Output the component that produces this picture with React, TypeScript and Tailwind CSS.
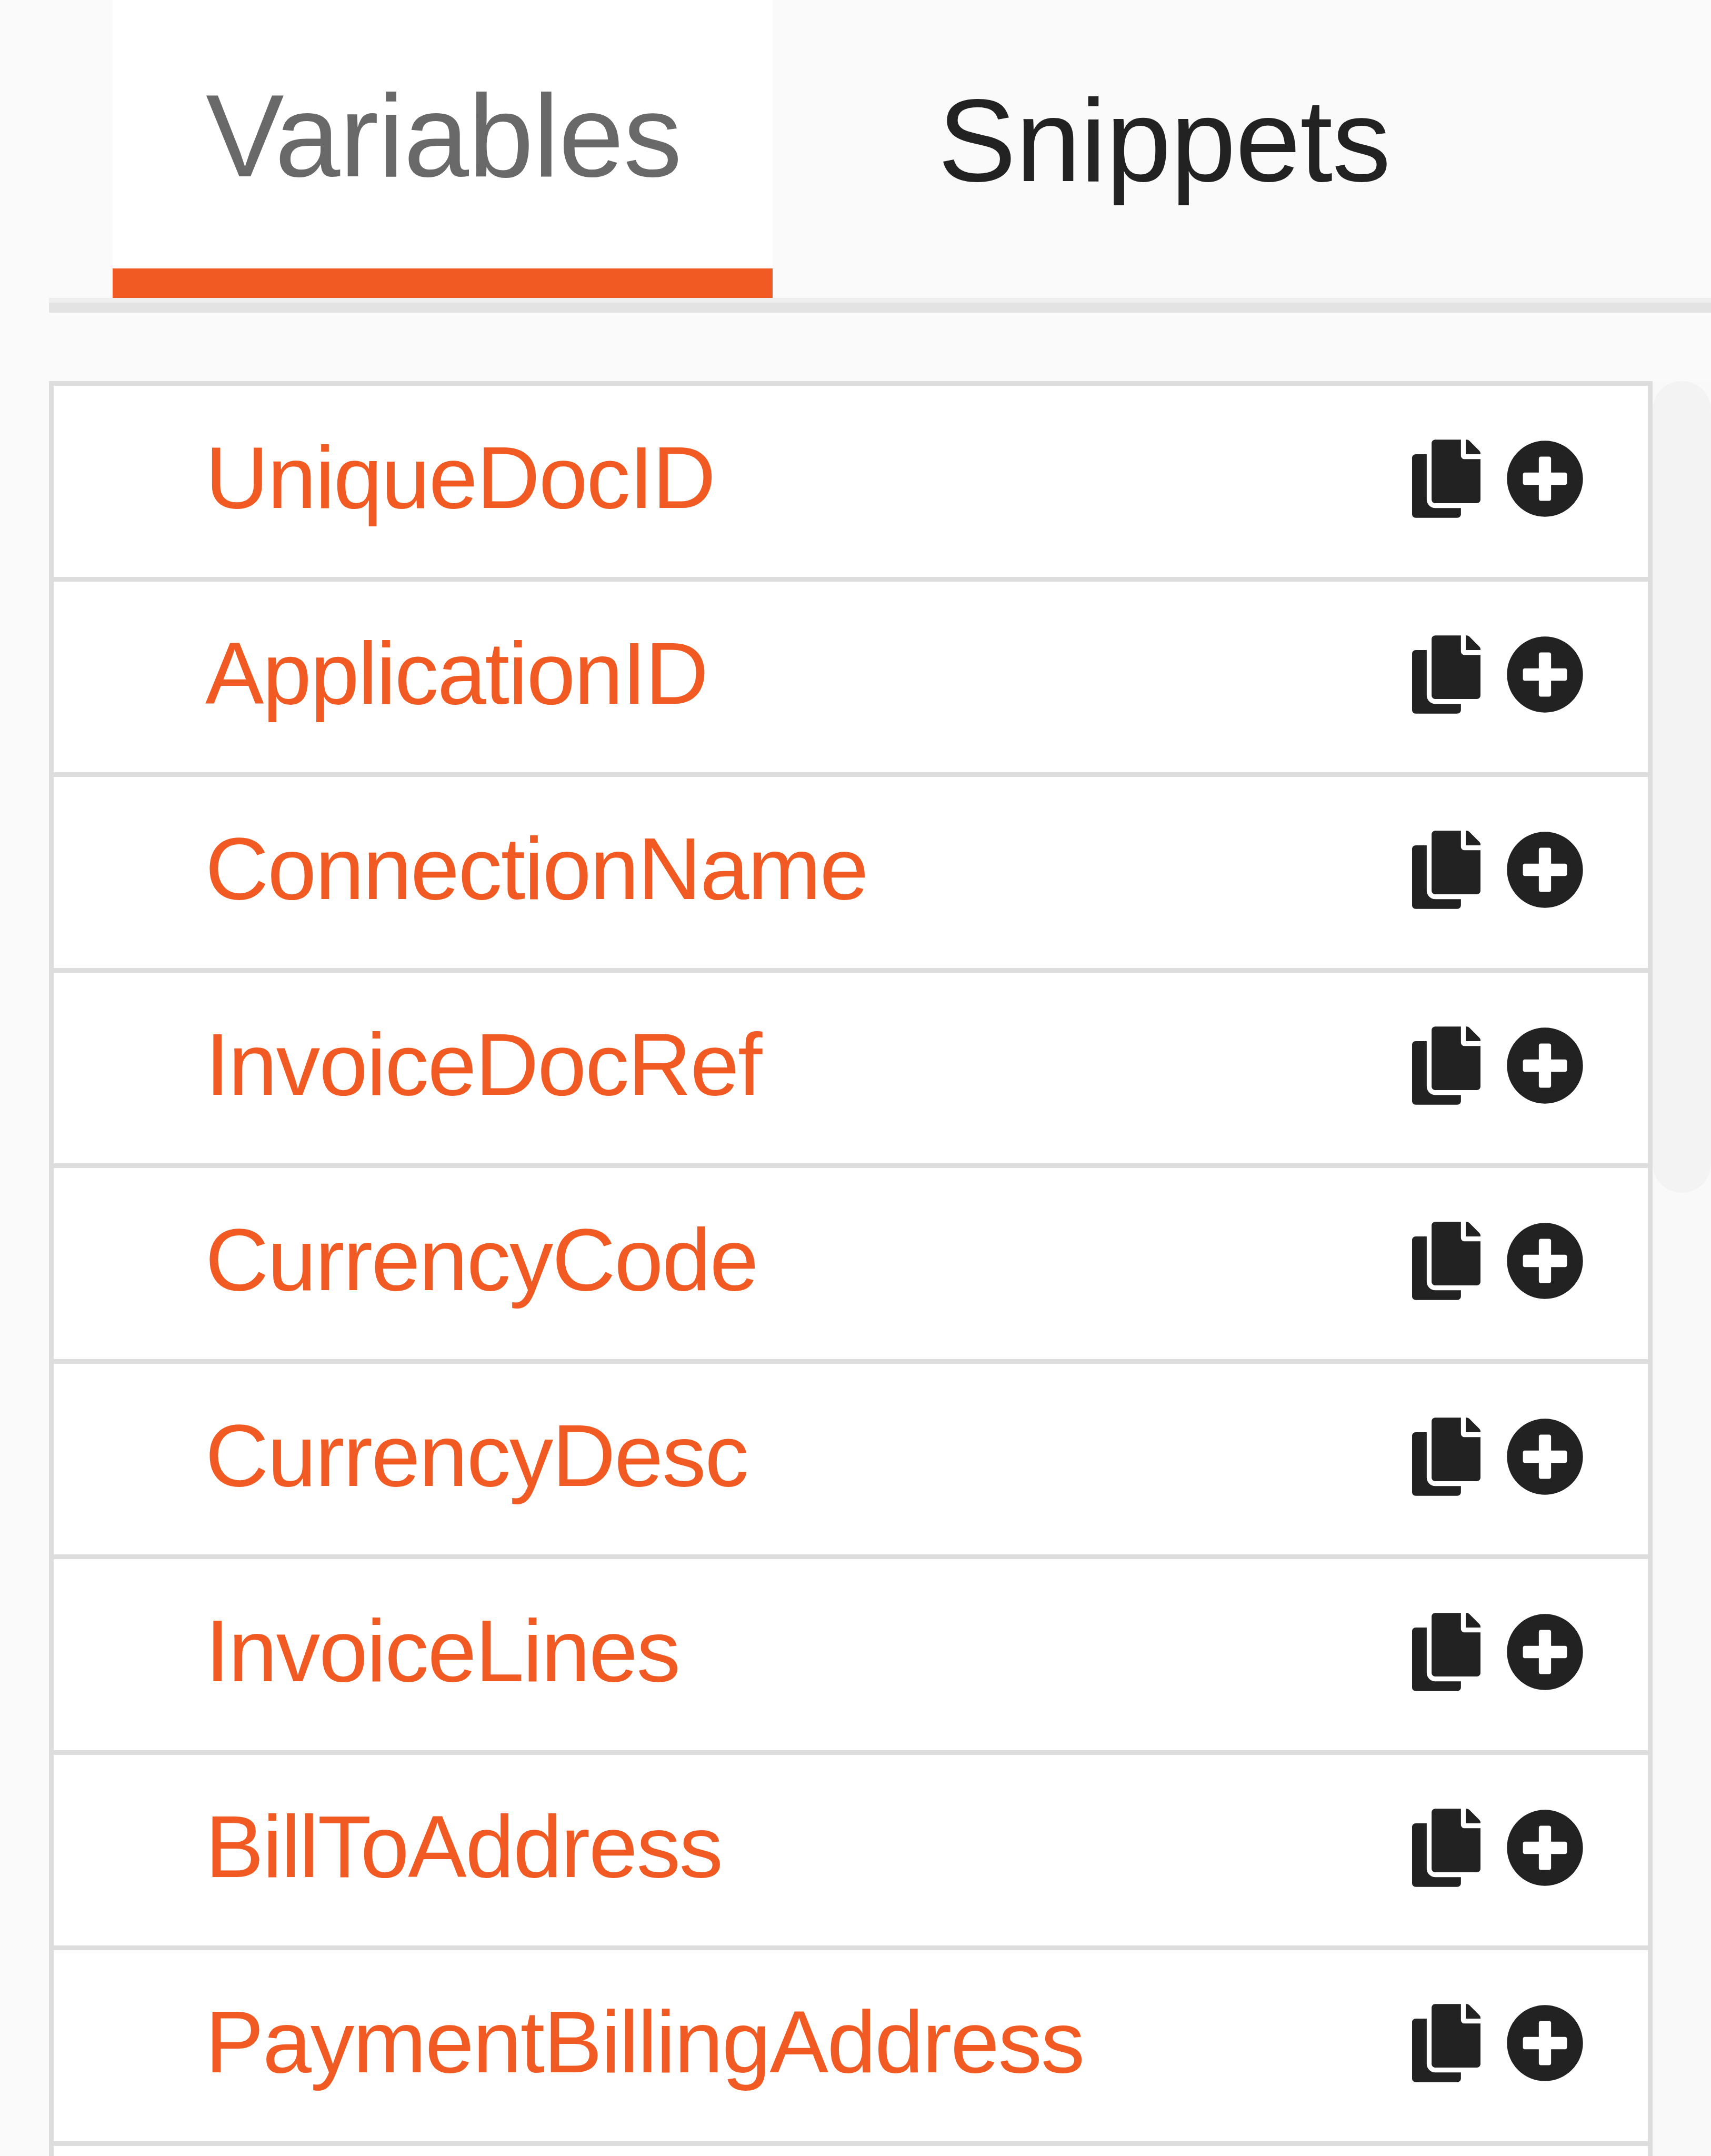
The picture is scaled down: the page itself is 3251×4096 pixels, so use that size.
import { useState } from "react";
import { FaCopy, FaPlusCircle } from "react-icons/fa";

const variables = [
  "UniqueDocID",
  "ApplicationID",
  "ConnectionName",
  "InvoiceDocRef",
  "CurrencyCode",
  "CurrencyDesc",
  "InvoiceLines",
  "BillToAddress",
  "PaymentBillingAddress",
];

interface VariableRowProps {
  name: string;
}

function VariableRow({ name }: VariableRowProps) {
  return (
    <li className="box-border flex h-[371.5px] shrink-0 items-center justify-between border-t-[9px] border-[#dddddd] pr-[121px] pb-[9px] pl-[288px]">
      <span className="pb-1 text-[167px] leading-none tracking-[-2.3px] text-[#f15a22]">{name}</span>
      <div className="flex items-center gap-[48px] text-[#222222]">
        <button type="button" aria-label="Copy">
          <FaCopy className="block h-[149px] w-[130px]" />
        </button>
        <button type="button" aria-label="Insert">
          <FaPlusCircle className="block h-[149px] w-[149px]" />
        </button>
      </div>
    </li>
  );
}

export default function App() {
  const [activeTab, setActiveTab] = useState("variables");

  return (
    <div className="flex h-[4096px] w-[3251px] flex-col overflow-hidden bg-[#fafafa] pl-[93px] font-['Liberation_Sans',Arial,sans-serif]">
      {/* Tabs */}
      <div className="flex h-[566px] shrink-0 pl-[121px] text-[223px] leading-none tracking-[-1px]">
        <button
          type="button"
          aria-pressed={activeTab === "variables"}
          onClick={() => setActiveTab("variables")}
          className="flex w-[1254px] items-center border-b-[56px] border-[#f15a22] bg-white pt-1 pl-[177px] text-[#696969]"
        >
          Variables
        </button>
        <button
          type="button"
          aria-pressed={activeTab === "snippets"}
          onClick={() => setActiveTab("snippets")}
          className="flex items-center border-b-[56px] border-transparent pt-[22px] pl-[314px] text-[#222222]"
        >
          Snippets
        </button>
      </div>
      <div className="h-7 shrink-0 border-t-[9px] border-[#eeeeee] bg-[#e3e3e3]" />

      {/* Variable list */}
      <div className="mt-[130px] flex min-h-0 flex-1">
        <ul className="flex w-[3047px] flex-col border-x-[9px] border-[#dddddd] bg-white">
          {variables.map((name) => (
            <VariableRow key={name} name={name} />
          ))}
          <li className="h-[28px] shrink-0 border-t-[9px] border-[#dddddd]" />
        </ul>
        <div className="flex-1 bg-[#f9f9f9]">
          <div className="h-[1542px] rounded-full bg-[#f3f3f3]" />
        </div>
      </div>
    </div>
  );
}
